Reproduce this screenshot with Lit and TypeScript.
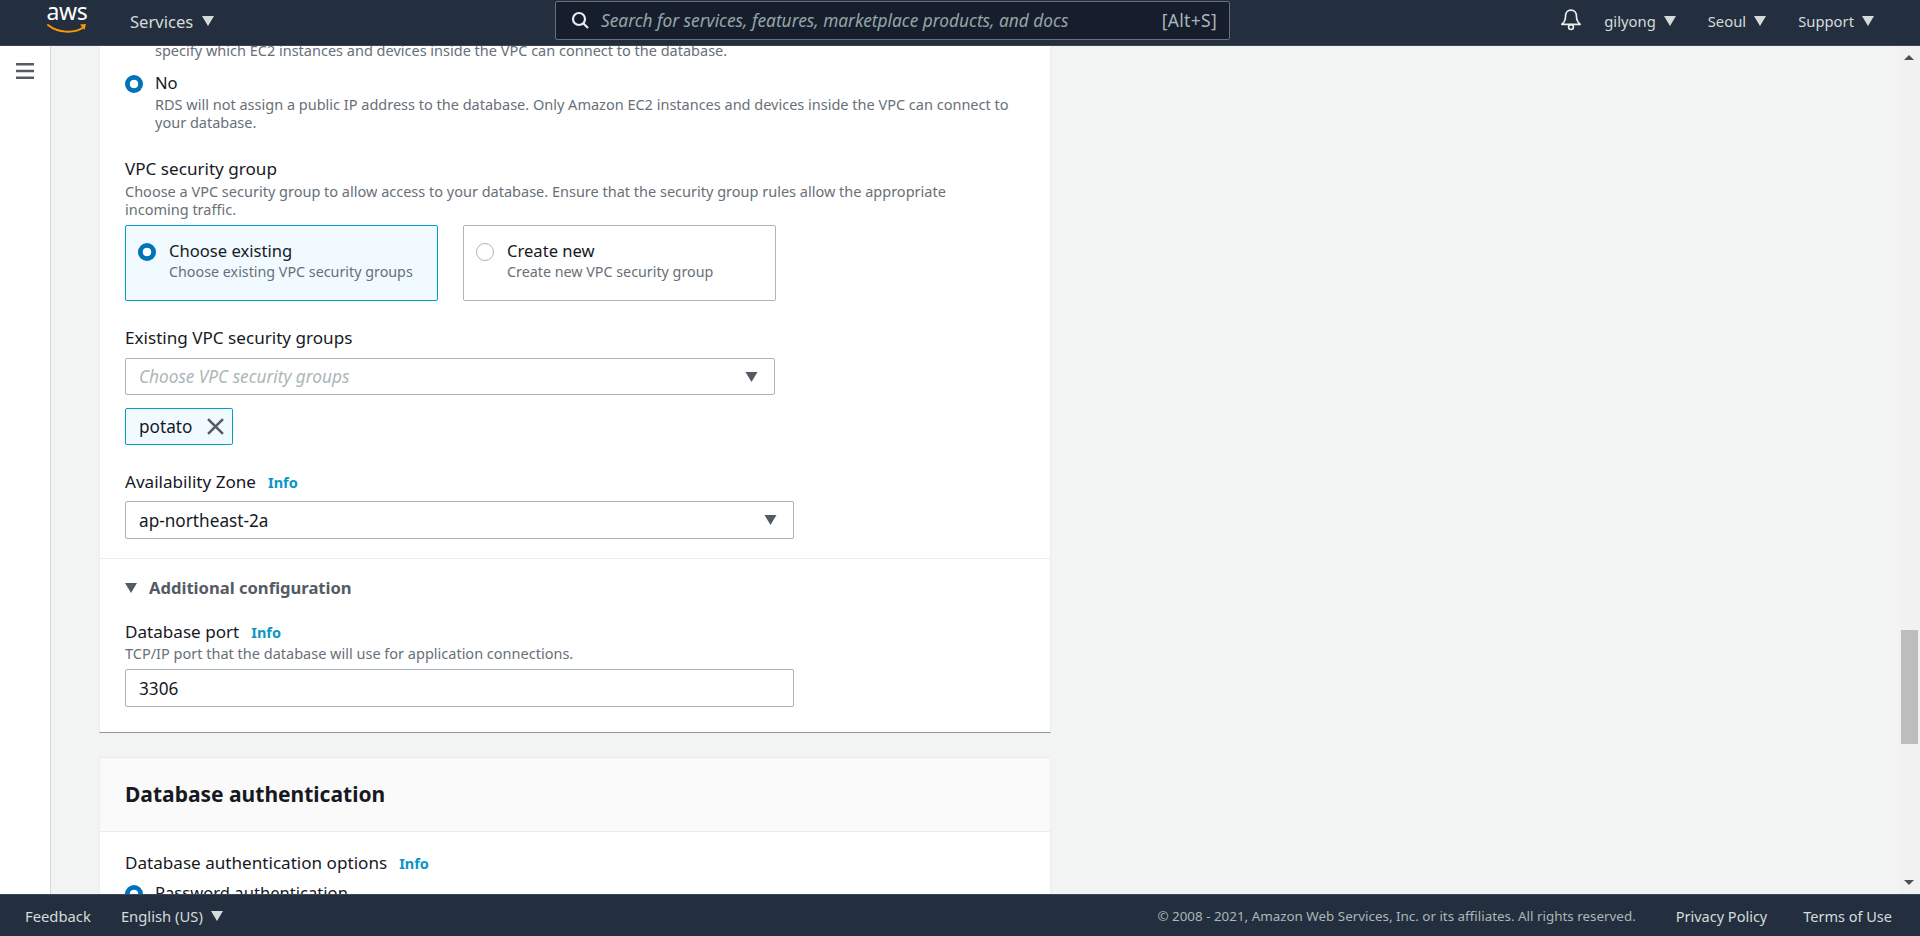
import { LitElement, html, css } from "lit";
import { customElement } from "lit/decorators.js";

const tri = (cls: string) => html`<svg class=${cls} viewBox="0 0 12 10"><path d="M0 0h12L6 10z" fill="currentColor"/></svg>`;

@customElement("app-root")
export class AppRoot extends LitElement {
  static styles = css`
    :host { display: block; font-family: "Noto Sans", sans-serif; color: #16191f; font-size: 14.5px; }
    * { box-sizing: border-box; }
    .app { display: flex; flex-direction: column; height: 100vh; overflow: hidden; background: #f2f3f3; }
    .top { flex: 0 0 46px; background: #232f3e; border-bottom: 1px solid #3c4654; display: flex; align-items: center; color: #d5dbdb; position: relative; z-index: 2; padding-bottom: 3px; }
    .logo { margin-left: 47px; width: 40px; height: 30px; position: relative; display: flex; justify-content: center; }
    .logo span { color: #fff; font-family: "Noto Sans", sans-serif; font-size: 23px; line-height: 20px; margin-top: -5px; letter-spacing: -0.4px; }
    .logo svg { position: absolute; left: 0; top: 17px; width: 40px; height: 12px; }
    .svc { margin-left: 43px; font-size: 16.6px; display: flex; align-items: center; gap: 9px; width: 110px; }
    .ddt { width: 12px; height: 10px; color: #d5dbdb; flex: none; }
    .search { margin-left: 315px; width: 675px; height: 39px; background: #161e2d; border: 1px solid #687078; border-radius: 2px; display: flex; align-items: center; padding: 0 12px 0 14px; margin-top: -2px; }
    .search svg { width: 20px; height: 20px; flex: none; }
    .search i { margin-left: 11px; font-size: 17.3px; color: #95a5a6; flex: 1; white-space: nowrap; }
    .search span { font-size: 17.5px; color: #aab7b8; letter-spacing: 0.3px; }
    .right { margin-left: auto; display: flex; align-items: center; font-size: 14.8px; padding-right: 46px; }
    .bell { width: 24px; height: 24px; margin-right: 21px; margin-top: -2px; }
    .ri { display: flex; align-items: center; gap: 8px; margin-right: 32px; }
    .ri:last-child { margin-right: 0; }
    .body { flex: 1; min-height: 0; display: flex; }
    .side { flex: 0 0 51px; background: #fff; border-right: 1px solid #d5dbdb; padding: 17px 0 0 16px; }
    .side svg { width: 18px; height: 16px; display: block; }
    .page { flex: 1; min-width: 0; overflow: hidden; padding-left: 49px; }
    .scrollwrap { margin-top: -5px; width: 951px; }
    .card { background: #fff; padding: 0 25px 25px; border-left: 1px solid #eaeded; border-right: 1px solid #eaeded; border-bottom: 1px solid #8d9b9b; margin: 0 0 24px -1px; width: 952px; }
    .clip { line-height: 18px; color: #687078; margin-left: 30px; }
    .rowr { display: flex; margin-top: 13px; gap: 12px; }
    .radio { width: 18px; height: 18px; border-radius: 50%; flex: none; margin-top: 3px; }
    .on { background: radial-gradient(circle, #fff 0 4px, #0073bb 4.6px); }
    .off { border: 1.5px solid #aab7b8; background: #fff; }
    .t { font-size: 16.6px; line-height: 22px; }
    .d { line-height: 18px; color: #687078; }
    .d2 { line-height: 17.5px; color: #687078; margin-top: 2px; }
    .lab { font-size: 17.1px; line-height: 22px; margin-top: 26px; }
    .first { margin-top: 27px; }
    .mt2 { margin-top: 2px; }
    .cards { display: flex; gap: 25px; margin-top: 7px; }
    .opt { width: 313px; height: 76px; border: 1px solid #aab7b8; border-radius: 2px; padding: 14px 12px; display: flex; gap: 13px; }
    .opt .radio { margin-top: 3px; }
    .opt.sel { background: #f1faff; border-color: #00a1c9; }
    .opt .d { margin-top: 1px; font-size: 14.3px; }
    .sel1 { border: 1px solid #aab7b8; border-radius: 2px; background: #fff; display: flex; align-items: center; padding: 0 16px 0 13px; font-size: 17.2px; }
    .w650 { width: 650px; height: 37px; margin-top: 9px; }
    .w669 { width: 669px; height: 38px; margin-top: 8px; }
    .ph { font-style: italic; color: #aab7b8; flex: 1; }
    .grow { flex: 1; }
    .arr { width: 13px; height: 10px; color: #545b64; }
    .tag { margin-top: 13px; width: 108px; height: 37px; border: 1px solid #00a1c9; background: #f1faff; border-radius: 2px; display: flex; align-items: center; padding: 0 8px 0 13px; font-size: 17.2px; justify-content: space-between; }
    .tag svg { width: 17px; height: 17px; }
    .info { color: #0a95c6; font-weight: 700; font-size: 14.5px; margin-left: 12px; }
    .divider { height: 1px; background: #eaeded; margin: 19px -25px 0; }
    .add { display: flex; align-items: center; gap: 12px; margin-top: 18px; line-height: 22px; font-size: 16.6px; font-weight: 700; color: #545b64; }
    .add svg { width: 12px; height: 10px; color: #545b64; }
    .port { margin-top: 22px; }
    .pd { margin-top: 1px; }
    .inp { margin-top: 7px; }
    .h2 { background: #fafafa; height: 75px; margin: 0 -25px; padding: 0 25px 2px; display: flex; align-items: center; border-top: 1px solid #eaeded; border-bottom: 1px solid #eaeded; font-size: 21px; font-weight: 700; }
    .opts { margin-top: 20px; }
    .pw { margin-top: 8px; }
    .foot { flex: 0 0 42px; background: #232f3e; border-top: 1px solid #3c4654; display: flex; align-items: center; color: #d5dbdb; padding: 0 28px 0 25px; position: relative; z-index: 2; font-size: 14.8px; }
    .foot a { white-space: nowrap; }
    .foot .lang { margin-left: 30px; display: flex; align-items: center; gap: 8px; }
    .foot .copy { margin-left: auto; color: #aab7b8; font-size: 13.4px; }
    .foot .pp { margin-left: 40px; font-size: 14.5px; }
    .foot .tu { margin-left: 36px; font-size: 14.5px; }
    .sb { flex: 0 0 21px; background: #f1f1f1; position: relative; }
    .sb .up, .sb .dn { position: absolute; left: 5px; width: 10px; height: 5px; }
    .sb .up { top: 9px; }
    .sb .dn { bottom: 9px; }
    .thumb { position: absolute; left: 2px; right: 2px; top: 584px; height: 114px; background: #bdbdbd; }
  `;

  render() {
    return html`<div class="app">
      <header class="top">
        <div class="logo"><span>aws</span><svg viewBox="0 0 40 12"><path d="M1 2c10 8 26 9 36 2" fill="none" stroke="#f90" stroke-width="2" stroke-linecap="round"/><path d="M33 1.500l6-.5-1.500 6z" fill="#f90"/></svg></div>
        <div class="svc">Services ${tri("ddt")}</div>
        <div class="search">
          <svg viewBox="0 0 20 20"><circle cx="9" cy="9" r="6" fill="none" stroke="#eaeded" stroke-width="2.200"/><path d="M13.500 13.500L18 18" stroke="#eaeded" stroke-width="2.200"/></svg>
          <i>Search for services, features, marketplace products, and docs</i>
          <span>[Alt+S]</span>
        </div>
        <div class="right">
          <svg class="bell" viewBox="0 0 22 22"><path d="M11 2c-3.500 0-5 2.800-5 5.500 0 3-1 5.500-3.500 7.500h17c-2.500-2-3.500-4.500-3.500-7.500C16 4.800 14.500 2 11 2z" fill="none" stroke="#eaeded" stroke-width="1.500" stroke-linejoin="round"/><circle cx="11" cy="17.500" r="2.200" fill="none" stroke="#eaeded" stroke-width="1.500"/></svg>
          <div class="ri">gilyong ${tri("ddt")}</div>
          <div class="ri">Seoul ${tri("ddt")}</div>
          <div class="ri">Support ${tri("ddt")}</div>
        </div>
      </header>
      <div class="body">
        <nav class="side"><svg viewBox="0 0 18 16"><path d="M0 1.200h18M0 8h18M0 14.800h18" stroke="#545b64" stroke-width="2.400"/></svg></nav>
        <main class="page"><div class="scrollwrap">
          <section class="card">
            <div class="clip">specify which EC2 instances and devices inside the VPC can connect to the database.</div>
            <div class="rowr"><span class="radio on"></span><div><div class="t">No</div><div class="d2">RDS will not assign a public IP address to the database. Only Amazon EC2 instances and devices inside the VPC can connect to<br>your database.</div></div></div>
            <div class="lab first">VPC security group</div>
            <div class="d mt2">Choose a VPC security group to allow access to your database. Ensure that the security group rules allow the appropriate<br>incoming traffic.</div>
            <div class="cards">
              <div class="opt sel"><span class="radio on"></span><div><div class="t">Choose existing</div><div class="d">Choose existing VPC security groups</div></div></div>
              <div class="opt"><span class="radio off"></span><div><div class="t">Create new</div><div class="d">Create new VPC security group</div></div></div>
            </div>
            <div class="lab">Existing VPC security groups</div>
            <div class="sel1 w650"><span class="ph">Choose VPC security groups</span>${tri("arr")}</div>
            <div class="tag">potato<svg viewBox="0 0 16 16"><path d="M1 1l14 14M15 1L1 15" stroke="#545b64" stroke-width="2.400"/></svg></div>
            <div class="lab">Availability Zone<span class="info">Info</span></div>
            <div class="sel1 w669"><span class="grow">ap-northeast-2a</span>${tri("arr")}</div>
            <div class="divider"></div>
            <div class="add">${tri("")}Additional configuration</div>
            <div class="lab port">Database port<span class="info">Info</span></div>
            <div class="d pd">TCP/IP port that the database will use for application connections.</div>
            <div class="sel1 w669 inp">3306</div>
          </section>
          <section class="card">
            <div class="h2">Database authentication</div>
            <div class="lab opts">Database authentication options<span class="info">Info</span></div>
            <div class="rowr pw"><span class="radio on"></span><div class="t">Password authentication</div></div>
          </section>
        </div></main>
        <div class="sb">
          <svg class="up" viewBox="0 0 10 5"><path d="M0 5h10L5 0z" fill="#505050"/></svg>
          <div class="thumb"></div>
          <svg class="dn" viewBox="0 0 10 5"><path d="M0 0h10L5 5z" fill="#505050"/></svg>
        </div>
      </div>
      <footer class="foot">
        <a>Feedback</a>
        <span class="lang">English (US) ${tri("ddt")}</span>
        <span class="copy">© 2008 - 2021, Amazon Web Services, Inc. or its affiliates. All rights reserved.</span>
        <a class="pp">Privacy Policy</a>
        <a class="tu">Terms of Use</a>
      </footer>
    </div>`;
  }
}
